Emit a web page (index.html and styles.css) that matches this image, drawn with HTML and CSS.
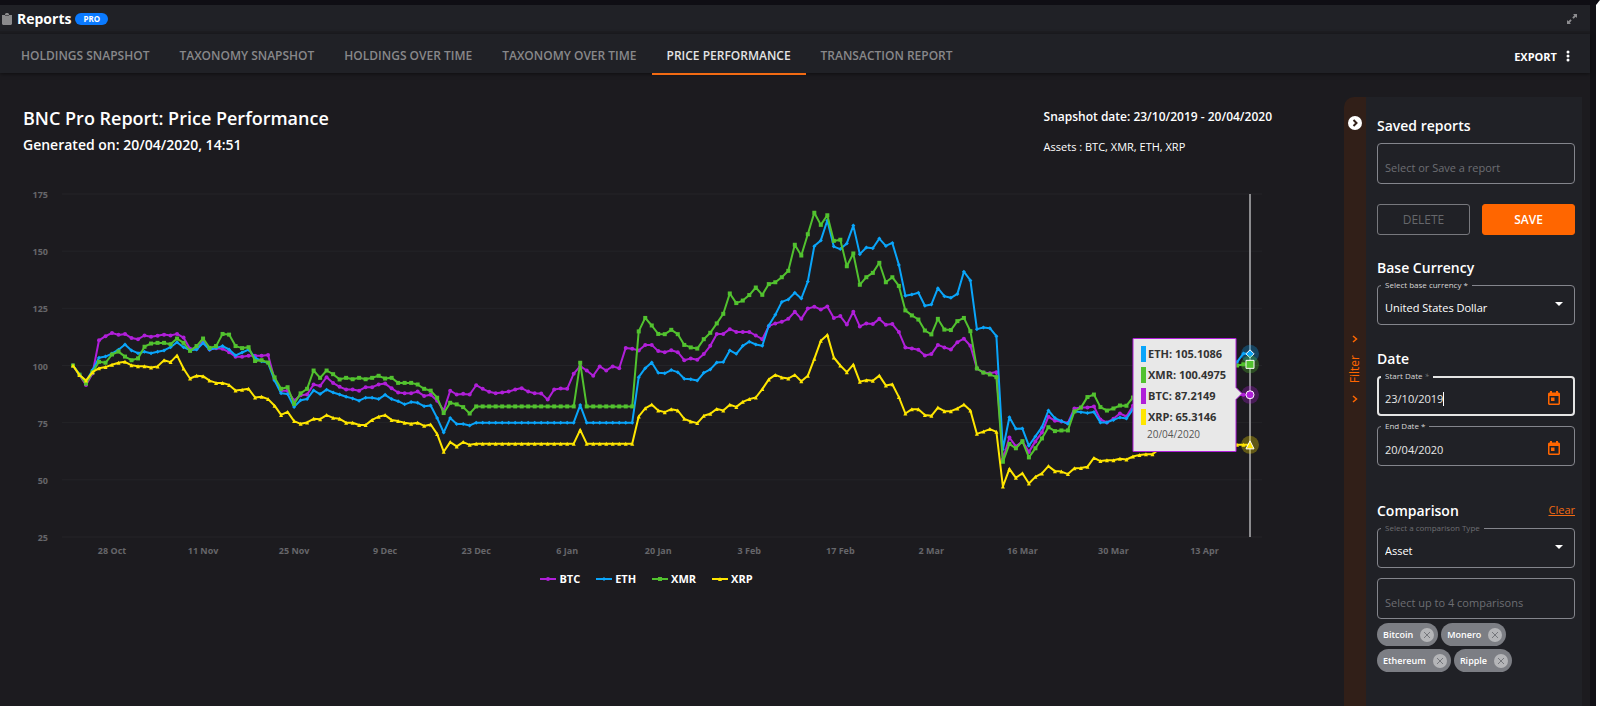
FILE: index.html
```html
<!DOCTYPE html>
<html lang="en">
<head>
  <meta charset="UTF-8" />
  <meta name="viewport" content="width=device-width, initial-scale=1.0"/>
  <title>Reports</title>
  <link rel="stylesheet" href="styles.css">
</head>
<body>
  <div class="app">
    <header class="title-bar">
      <svg class="clipboard" width="10" height="12" viewBox="0 0 10 12"><path fill="#8a8a8c" d="M0 2h3V1l1-1h2l1 1v1h3v9l-1 1H1l-1-1z"/><path fill="#4c4c50" d="M3 2h4v1H3z"/></svg>
      <h1>Reports</h1>
      <span class="badge">PRO</span>
      <button class="expand" aria-label="Expand">
        <svg width="10" height="10" viewBox="0 0 10 10"><path fill="#8c8c8f" d="M6 0h4v4L8.700 2.700 6.500 4.700 5.300 3.500 7.300 1.300zM0 6l1.300 1.300L3.500 5.300l1.200 1.200L2.700 8.700 4 10H0z"/></svg>
      </button>
    </header>

    <nav class="tabs">
      <button class="tab">HOLDINGS SNAPSHOT</button>
      <button class="tab">TAXONOMY SNAPSHOT</button>
      <button class="tab">HOLDINGS OVER TIME</button>
      <button class="tab">TAXONOMY OVER TIME</button>
      <button class="tab active">PRICE PERFORMANCE</button>
      <button class="tab">TRANSACTION REPORT</button>
      <button class="export">EXPORT
        <svg width="4" height="12" viewBox="0 0 4 12" fill="#fff"><circle cx="2" cy="2" r="1.500"/><circle cx="2" cy="6" r="1.500"/><circle cx="2" cy="10" r="1.500"/></svg>
      </button>
    </nav>

    <div class="content">
      <main class="report">
        <div class="report-head">
          <div>
            <h2>BNC Pro Report: Price Performance</h2>
            <p class="generated">Generated on: 20/04/2020, 14:51</p>
          </div>
          <div class="report-meta">
            <p class="snapshot">Snapshot date: 23/10/2019 - 20/04/2020</p>
            <p class="assets">Assets : BTC, XMR, ETH, XRP</p>
          </div>
        </div>
        <svg id="chart" class="chart" height="376"></svg>
        <div id="legend" class="legend"></div>
      </main>

      <aside class="filter">
        <div class="rail">
          <button class="toggle" aria-label="Close filter">
            <svg width="14" height="14" viewBox="0 0 14 14"><circle cx="7" cy="7" r="7" fill="#fff"/><path d="M5.500 4l3 3-3 3" fill="none" stroke="#311f18" stroke-width="2"/></svg>
          </button>
          <div class="rail-label">
            <svg width="6" height="8" viewBox="0 0 6 8"><path d="M1 1l3.500 3L1 7" fill="none" stroke="#ff6600" stroke-width="1.500"/></svg>
            <span>Filter</span>
            <svg width="6" height="8" viewBox="0 0 6 8"><path d="M1 1l3.500 3L1 7" fill="none" stroke="#ff6600" stroke-width="1.500"/></svg>
          </div>
        </div>

        <form class="panel">
          <section>
            <h3>Saved reports</h3>
            <div class="field">
              <input class="tall" type="text" aria-label="Saved report" placeholder="Select or Save a report">
            </div>
            <div class="actions">
              <button type="button" class="btn" disabled>DELETE</button>
              <button type="button" class="btn primary">SAVE</button>
            </div>
          </section>

          <section>
            <h3>Base Currency</h3>
            <div class="field">
              <label for="currency">Select base currency *</label>
              <select id="currency"><option>United States Dollar</option></select>
              <svg class="arrow" width="8" height="4" viewBox="0 0 8 4"><path d="M0 0h8L4 4z" fill="#fff"/></svg>
            </div>
          </section>

          <section>
            <h3>Date</h3>
            <div class="field focused">
              <label for="start">Start Date <i>*</i></label>
              <input id="start" type="text" value="23/10/2019">
              <svg class="calendar" width="12" height="14" viewBox="0 0 12 14"><path fill="#ff6600" fill-rule="evenodd" d="M2 0h2v1.500h4V0h2v1.500h1l1 1V13l-1 1H1l-1-1V2.500l1-1h1zM1.500 5v7.500h9V5z"/><path fill="#ff6600" d="M3 6.500h3.500V10H3z"/></svg>
            </div>
            <div class="field">
              <label for="end">End Date *</label>
              <input id="end" type="text" value="20/04/2020">
              <svg class="calendar" width="12" height="14" viewBox="0 0 12 14"><path fill="#ff6600" fill-rule="evenodd" d="M2 0h2v1.500h4V0h2v1.500h1l1 1V13l-1 1H1l-1-1V2.500l1-1h1zM1.500 5v7.500h9V5z"/><path fill="#ff6600" d="M3 6.500h3.500V10H3z"/></svg>
            </div>
          </section>

          <section class="comparison">
            <div class="section-head">
              <h3>Comparison</h3>
              <a href="#">Clear</a>
            </div>
            <div class="field muted">
              <label for="type">Select a comparison Type</label>
              <select id="type"><option>Asset</option></select>
              <svg class="arrow" width="8" height="4" viewBox="0 0 8 4"><path d="M0 0h8L4 4z" fill="#fff"/></svg>
            </div>
            <div class="field">
              <input class="tall" type="text" aria-label="Comparisons" placeholder="Select up to 4 comparisons">
            </div>
            <div id="chips" class="chips"></div>
          </section>
        </form>
      </aside>
    </div>
  </div>

  <script src="script.js"></script>
</body>
</html>
```
FILE: styles.css
```css
* {
  box-sizing: border-box;
}

body {
  margin: 0;
  font-family: "Open Sans", sans-serif;
  font-size: 12px;
  color: #fff;
  background-color: #1c1b1f;
  overflow: hidden;
}

h1, h2, h3, p {
  margin: 0;
}

button, input, select {
  font-family: inherit;
}

button {
  border: none;
  background: none;
  padding: 0;
  color: inherit;
  cursor: pointer;
}

.app {
  display: flex;
  flex-direction: column;
  height: 100vh;
  border-top: 5px solid #0f0e14;
  border-right: 4px solid #fff;
  box-shadow: inset -6px 0 #111015;
  padding-right: 6px;
}

.title-bar {
  display: flex;
  align-items: center;
  height: 29px;
  padding: 2px 13px 0 2px;
  background-color: #202126;
  border-bottom: 3px solid #1d1d21;
}

.title-bar h1 {
  margin-left: 5px;
  font-size: 14px;
  line-height: 20px;
}

.badge {
  margin-left: 4px;
  padding: 0 8px;
  border-radius: 6px;
  background-color: #0a7aff;
  font-size: 8px;
  line-height: 12px;
  font-weight: 700;
}

.expand {
  margin-left: auto;
  line-height: 0;
}

.tabs {
  display: flex;
  height: 39px;
  flex: none;
  padding: 0 20px 0 6px;
  background-color: #202126;
  box-shadow: 0 1px 4px rgba(0, 0, 0, 0.5);
}

.tab {
  height: 41px;
  padding: 4px 15px 0;
  border-bottom: 2px solid transparent;
  color: #88888a;
  font-size: 12px;
  font-weight: 600;
}

.tab.active {
  color: #e4e4e4;
  border-bottom-color: #f26a12;
}

.export {
  display: flex;
  align-items: center;
  gap: 9px;
  margin-left: auto;
  padding-top: 5px;
  font-size: 11px;
  font-weight: 700;
}

.content {
  display: flex;
  flex: 1;
  min-height: 0;
}

.report {
  flex: 1;
  min-width: 0;
}

.report-head {
  display: flex;
  justify-content: space-between;
  height: 107px;
  padding: 32px 72px 0 23px;
}

.report-head h2 {
  font-size: 18px;
  line-height: 26px;
  font-weight: 600;
}

.generated {
  margin-top: 2px;
  font-size: 14px;
  line-height: 24px;
  font-weight: 600;
}

.snapshot {
  font-size: 12px;
  line-height: 24px;
  font-weight: 600;
}

.assets {
  margin-top: 8px;
  font-size: 11px;
  line-height: 20px;
}

.chart {
  display: block;
  width: 100%;
}

.grid {
  stroke: #242428;
}

.axis {
  fill: #66666a;
  font-size: 9px;
  font-weight: 700;
}

.crosshair {
  stroke: #8b8b8e;
  stroke-width: 2;
}

.line {
  fill: none;
  stroke-width: 2;
  stroke-linejoin: round;
}

.tip-box {
  fill: #e8e8e8;
  stroke: #b01fd9;
}

.tip-text {
  fill: #333;
  font-size: 11px;
  font-weight: 700;
}

.tip-date {
  fill: #555;
  font-size: 10px;
}

.legend {
  display: flex;
  justify-content: center;
  gap: 16px;
  margin-top: 15px;
  padding-right: 51px;
  font-size: 11px;
  line-height: 16px;
  font-weight: 700;
}

.legend-item {
  display: flex;
  align-items: center;
  gap: 3px;
}

.filter {
  display: flex;
  width: 238px;
  margin: 24px 8px 0 0;
}

.rail {
  display: flex;
  flex-direction: column;
  align-items: center;
  width: 22px;
  padding-top: 19px;
  border-top-left-radius: 10px;
  background-color: #311f18;
}

.toggle {
  line-height: 0;
}

.rail-label {
  display: flex;
  flex-direction: column;
  align-items: center;
  gap: 12px;
  margin-top: 205px;
  color: #ff6600;
}

.rail-label span {
  writing-mode: vertical-rl;
  transform: rotate(180deg);
  font-size: 12px;
  line-height: 16px;
}

.panel {
  flex: 1;
  padding: 18px 7px 0 11px;
  background-color: #202126;
}

h3 {
  font-size: 14px;
  line-height: 22px;
  font-weight: 600;
}

.field {
  position: relative;
  margin: 6px 0 10px;
}

.field label {
  position: absolute;
  top: -6px;
  left: 4px;
  padding: 0 4px;
  background-color: #202126;
  color: #d8d8d8;
  font-size: 8px;
  line-height: 12px;
}

.field i {
  color: #77777a;
}

.field.muted label {
  color: #6e6e72;
}

.field input, .field select {
  display: block;
  width: 100%;
  height: 40px;
  padding: 6px 7px 0;
  border: 1px solid #84858c;
  border-radius: 4px;
  outline: none;
  appearance: none;
  background: none;
  color: #e8e8e8;
  font-size: 11px;
}

.field select {
  padding-top: 4px;
  color: #fff;
  font-weight: 500;
}

.field .tall {
  height: 41px;
  padding-top: 8px;
}

.field input::placeholder {
  color: #6d6e73;
}

.field.focused input {
  border: 2px solid #e4e4e4;
  padding: 5px 6px 0;
  caret-color: transparent;
}

/* text caret */
.field.focused::after {
  content: "";
  position: absolute;
  top: 16px;
  left: 66px;
  width: 1px;
  height: 14px;
  background-color: #fff;
}

.arrow {
  position: absolute;
  top: 17px;
  right: 12px;
}

.calendar {
  position: absolute;
  top: 15px;
  right: 15px;
}

.actions {
  display: flex;
  gap: 12px;
  margin: 20px 0 22px;
}

.btn {
  flex: 1;
  height: 31px;
  border: 1px solid #77787d;
  border-radius: 3px;
  font-size: 12px;
}

.btn:disabled {
  color: #66676b;
}

.btn.primary {
  border-color: #ff6600;
  background-color: #ff6600;
  font-weight: 600;
}

.panel section:nth-child(2) {
  margin-bottom: 23px;
}

.comparison {
  margin-top: 34px;
}

.section-head {
  display: flex;
  justify-content: space-between;
}

.section-head a {
  color: #f26a12;
  font-size: 11px;
  line-height: 20px;
}

.chips {
  display: flex;
  flex-wrap: wrap;
  gap: 3px;
  margin-top: -6px;
}

.chip {
  display: flex;
  align-items: center;
  gap: 7px;
  height: 23px;
  padding: 0 4px 0 6px;
  border-radius: 12px;
  background-color: #7c7e84;
  font-size: 9px;
  font-weight: 600;
}

.chip button {
  line-height: 0;
}
```
FILE: script.js
```javascript
// Daily index values, 22 Oct 2019 = 100
const flat = (value, count) => Array(count).fill(value);

const btc = [100, 95.8, 91.5, 96.5, 111, 112.8, 114.2, 113.4, 113.8, 112, 111.5, 113.1, 112.6, 113, 113.5, 113.1,
  113.8, 112.2, 107.3, 107.3, 110.6, 107, 107.5, 107.3, 105.8, 103.8, 103.8, 104.3, 104.3, 104.3, 104.6, 93.9,
  89, 89, 84.7, 87, 87.3, 91.7, 91.1, 94.9, 92.4, 90.7, 89.5, 89.5, 89, 90.5, 90.5, 91.7, 92.1, 90, 88.2, 87.9,
  87.9, 88.6, 86.7, 87.2, 84.6, 80.3, 89, 87.3, 87.6, 87.3, 91.4, 89.8, 88.5, 87.9, 88.2, 88.6, 89.5, 90.1, 88.6,
  87.9, 87.8, 85.1, 89.5, 89.9, 89.8, 96.4, 99.7, 97.8, 95.5, 99.6, 97.8, 99.6, 98.8, 107.7, 107.3, 106.6, 109,
  109, 106.3, 105.8, 106.7, 105.8, 102.3, 103.1, 102.5, 105, 108.6, 113.8, 113.8, 115.9, 114.7, 114.7, 114.7,
  113.1, 111.5, 117.2, 118.4, 119.1, 120.4, 123.5, 120.4, 124.9, 125.7, 124.5, 125.8, 120.8, 121.6, 117.9, 123.5,
  117.1, 118.4, 118.1, 120.4, 117.8, 118.1, 114.6, 107.9, 107.4, 106.9, 104.4, 105, 109, 107.9, 107, 110.2, 111.7,
  108.6, 98.7, 96.9, 96.6, 97.1, 59, 68.5, 64.6, 66.8, 62.2, 66.8, 70.7, 77.6, 75.8, 75.5, 74.9, 81.2, 81.6, 81.6,
  82.1, 76.4, 75.1, 76.7, 79, 77.7, 82.4, 87, 87.5, 88, 88, 87, 84, 83.5, 84, 84.5, 84, 85, 86, 86.5, 87, 87,
  87, 87.2, 87.2];

const eth = [100, 96.1, 92.9, 98, 103.4, 103.9, 105.2, 106.9, 109.2, 106.6, 105.4, 106, 105.4, 106, 106.6, 108,
  110.2, 108, 106.7, 107, 109.8, 106.9, 107.7, 108.5, 107, 104.4, 105.7, 106.9, 103.4, 101.9, 101.2, 93.4, 87.9,
  87.5, 81.9, 84.8, 85.4, 89.1, 87.5, 89.4, 88.2, 87.3, 86.3, 85.6, 84.6, 85.9, 85.9, 85.3, 87.2, 85.3, 84.4, 83,
  84, 83.7, 82.2, 82.5, 77, 70.7, 77, 74.4, 74.4, 73.8, ...flat(75, 16), 82.7, ...flat(75, 8), 94.9, 98.8, 101.3,
  96.8, 96.6, 98, 97.1, 94.2, 94, 93.4, 96.8, 98.3, 101.3, 101.5, 106.6, 105.1, 108.6, 110.4, 109.2, 108.6, 117.5,
  122.2, 127.8, 128.9, 131.8, 129.3, 136.7, 152.2, 154.7, 163.4, 152, 150.9, 153.4, 161.2, 148.7, 151.6, 151.3,
  155.5, 152.3, 153.6, 144, 130.5, 131, 131.8, 126.1, 126.7, 133.8, 130.3, 129.6, 131.3, 141, 137.2, 115.9, 116.6,
  116.3, 112.8, 63.4, 77.4, 72.3, 72.4, 64.9, 69, 73, 80.3, 77, 75.7, 74.5, 79.9, 79.6, 79.2, 79.7, 75.1, 75.1,
  76.2, 77.3, 76.8, 80.9, 84, 88, 92, 92, 91, 90, 90, 91, 92, 93, 94, 94, 95, 96, 98, 101.5, 105.3, 105.1];

const xmr = [100, 96, 92.1, 97, 101.6, 101.2, 104.8, 106.1, 103.9, 102.3, 103.1, 108.2, 109.6, 109.9, 109.9, 109.3,
  111.8, 109.9, 106.4, 108.5, 111.8, 107.7, 108.5, 113.8, 113.5, 108.5, 107.6, 108, 102, 102.3, 101.3, 94.8, 89.8,
  90.5, 83.2, 87.8, 89.8, 97.8, 94.6, 97.8, 96.2, 93.9, 94.6, 94, 94.6, 94, 94.6, 95.5, 94.3, 94.6, 92.4, 92.4,
  92.4, 91.7, 89.8, 89, 85.9, 79.2, 83.7, 83, 81.8, 79, ...flat(82.1, 16), 101.2, ...flat(82.1, 8), 114.9, 120.8,
  117.5, 113.8, 113.7, 115.6, 113.7, 109, 107.9, 107.4, 111.5, 114.3, 118.4, 122.6, 131.5, 127.3, 128.4, 130.8,
  134.1, 130.9, 135.6, 136.4, 138.6, 141.4, 152.8, 148.1, 157.4, 166.8, 161.5, 165.7, 154.5, 155, 143.4, 149,
  135.3, 138.6, 140.5, 144.9, 136.4, 138.6, 134.8, 124.1, 121.9, 120.1, 115.3, 113.6, 120.4, 115.7, 115.5, 119.4,
  120.8, 115, 98.7, 96.9, 96.1, 94.9, 57.9, 65.7, 63.8, 66.9, 59.8, 63.8, 68.1, 73, 71.3, 71.6, 71.6, 79.9, 81.6,
  86.2, 87.3, 81.8, 80.3, 81.2, 82.5, 82.4, 86, 90, 92, 94, 94, 93, 92, 92, 94, 95, 96, 97, 98, 98.5, 99, 99.5, 100,
  100.5, 100.5];

const xrp = [100, 95.8, 93.4, 97.1, 98.8, 99.3, 100.3, 101.2, 101.6, 100.1, 99.7, 99.7, 99.1, 99.6, 102.3, 101.5,
  104.4, 98.7, 94.3, 95.5, 95.3, 93.4, 92.4, 92.4, 91.5, 89.1, 89.4, 89.8, 86, 86.3, 85.3, 82.4, 78.4, 79.7, 75.7,
  74.5, 75.1, 76.7, 76.5, 78.3, 77.1, 76.7, 75, 75, 74, 74, 76.2, 77.6, 78.3, 76.2, 75.7, 75, 74.5, 75, 73.6,
  74.2, 70, 62.3, 66.5, 64.6, 66.5, 65.3, ...flat(65.8, 16), 71.9, ...flat(65.8, 8), 77.7, 81.3, 82.9, 80.3, 79.6,
  80.9, 80.3, 76.7, 75.5, 74.8, 78, 78.9, 81, 80.3, 82.8, 81.9, 84.1, 85.3, 86, 89.7, 93.9, 95.9, 94.8, 94.3,
  95.9, 93.1, 95.5, 102.9, 110.8, 113.4, 103.5, 100, 97.1, 100.4, 92.9, 93.6, 93.3, 95.6, 91.3, 91.8, 86.2, 79,
  80.9, 80.9, 78.4, 78, 81.6, 80, 80, 81.2, 82.9, 80.3, 70.1, 71.1, 72.2, 71, 47.1, 54.8, 50.9, 52.9, 48.4, 51.3,
  52.8, 56, 53.8, 53.6, 52.5, 55.1, 55.2, 55.7, 59.6, 58.2, 58.6, 58.6, 59.2, 58.9, 60.2, 60.9, 61.2, 61.2, 63.4,
  63.5, 64, 64, 63.5, 63, 63.5, 64, 63.5, 63.2, 64, 65.3, 65.3, 65.3, 65.3];

const series = [
  { name: "BTC", color: "#b01fd9", marker: "circle", data: btc },
  { name: "ETH", color: "#0aa5fa", marker: "diamond", data: eth },
  { name: "XMR", color: "#52c22f", marker: "square", data: xmr },
  { name: "XRP", color: "#ffe600", marker: "triangle", data: xrp }
];

const dates = ["28 Oct", "11 Nov", "25 Nov", "9 Dec", "23 Dec", "6 Jan", "20 Jan", "3 Feb", "17 Feb", "2 Mar",
  "16 Mar", "30 Mar", "13 Apr"];

function marker(type, x, y, r, attrs) {
  if (type === "circle") return `<circle cx="${x}" cy="${y}" r="${r}" ${attrs}/>`;
  if (type === "square") return `<path d="M${x - r} ${y - r}h${2 * r}v${2 * r}h${-2 * r}z" ${attrs}/>`;
  if (type === "diamond") return `<path d="M${x} ${y - r}l${r} ${r}l${-r} ${r}l${-r} ${-r}z" ${attrs}/>`;
  return `<path d="M${x} ${y - r}l${r} ${2 * r}h${-2 * r}z" ${attrs}/>`;
}

function drawChart() {
  const svg = document.getElementById("chart");
  const width = svg.parentNode.clientWidth;
  const left = 73;
  const right = width - 94;
  const last = 181;
  const x = i => left + i * (right - left) / last;
  const y = v => 14 + (175 - v) * 343 / 150;
  let out = "";

  for (let v = 25; v <= 175; v += 25) {
    out += `<line class="grid" x1="62" x2="${right + 12}" y1="${y(v)}" y2="${y(v)}"/>`;
    out += `<text class="axis" x="48" y="${y(v) + 4}" text-anchor="end">${v}</text>`;
  }
  dates.forEach((d, i) => {
    out += `<text class="axis" x="${x(6 + i * 14)}" y="374" text-anchor="middle">${d}</text>`;
  });

  series.forEach(s => {
    const data = s.data.slice(0, last + 1);
    const points = data.map((v, i) => x(i).toFixed(1) + "," + y(v).toFixed(1)).join(" ");
    out += `<polyline class="line" stroke="${s.color}" points="${points}"/>`;
    data.forEach((v, i) => out += marker(s.marker, x(i), y(v), 2, `fill="${s.color}"`));
  });

  // Hovered day
  out += `<line class="crosshair" x1="${right}" x2="${right}" y1="${y(175)}" y2="${y(25)}"/>`;
  series.forEach(s => {
    const py = y(s.data[last]);
    out += `<circle cx="${right}" cy="${py}" r="9" fill="${s.color}" fill-opacity="0.3"/>`;
    out += marker(s.marker, right, py, 4, `fill="${s.color}" stroke="#fff"`);
  });

  // Tooltip
  const tx = right - 117;
  out += `<path class="tip-box" d="M${tx} 158.500h103v49l6 6l-6 6v52h-103z"/>`;
  [["ETH: 105.1086", 1], ["XMR: 100.4975", 2], ["BTC: 87.2149", 0], ["XRP: 65.3146", 3]].forEach((row, i) => {
    const ty = 174 + i * 21;
    out += `<rect x="${tx + 8}" y="${ty - 8}" width="5" height="16" fill="${series[row[1]].color}"/>`;
    out += `<text class="tip-text" x="${tx + 15}" y="${ty + 4}">${row[0]}</text>`;
  });
  out += `<text class="tip-date" x="${tx + 14}" y="258">20/04/2020</text>`;

  svg.innerHTML = out;
}

document.getElementById("legend").innerHTML = series.map(s =>
  `<span class="legend-item"><svg width="16" height="8"><path d="M0 4h16" stroke="${s.color}" stroke-width="2"/>` +
  marker(s.marker, 8, 4, 2, `fill="${s.color}"`) + `</svg>${s.name}</span>`).join("");

document.getElementById("chips").innerHTML = ["Bitcoin", "Monero", "Ethereum", "Ripple"].map(name =>
  `<span class="chip">${name}<button type="button" aria-label="Remove ${name}"><svg width="14" height="14">` +
  `<circle cx="7" cy="7" r="7" fill="#b4b5b8"/><path d="M4 4l6 6M10 4l-6 6" stroke="#75777c" stroke-width="1"/>` +
  `</svg></button></span>`).join("");

drawChart();
window.addEventListener("resize", drawChart);
```
